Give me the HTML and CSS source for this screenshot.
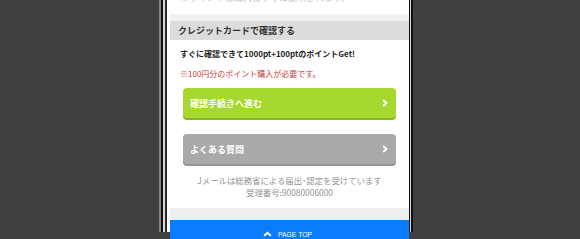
FILE: index.html
```html
<!DOCTYPE html>
<html lang="ja">
<head>
<meta charset="utf-8">
<title>クレジットカードで確認する</title>
<link rel="stylesheet" href="styles.css">
</head>
<body>
<div class="screen">
  <p class="cut">※ポイントは購入後すぐに反映されます。</p>
  <section class="card">
    <h2 class="card-title">クレジットカードで確認する</h2>
    <div class="card-body">
      <p class="lead">すぐに確認できて1000pt+100ptのポイントGet!</p>
      <p class="note">※100円分のポイント購入が必要です。</p>
      <a class="btn btn-green" href="#">確認手続きへ進む<svg class="chev" viewBox="0 0 6 8" width="6" height="8"><polyline points="1.2,1 4.5,4 1.2,7" fill="none" stroke="#fff" stroke-width="1.9"/></svg></a>
      <a class="btn btn-gray" href="#">よくある質問<svg class="chev" viewBox="0 0 6 8" width="6" height="8"><polyline points="1.2,1 4.5,4 1.2,7" fill="none" stroke="#fff" stroke-width="1.9"/></svg></a>
      <p class="license">Jメールは総務省による届出･認定を受けています<br>受理番号:90080006000</p>
    </div>
  </section>
  <div class="gap"></div>
  <a class="pagetop" href="#"><svg class="up" viewBox="0 0 10 6" width="9" height="6"><polyline points="1.3,5 5,1.6 8.7,5" fill="none" stroke="#fff" stroke-width="2.2"/></svg>PAGE TOP</a>
</div>
</body>
</html>
```
FILE: styles.css
```css
html, body {
  margin: 0;
  padding: 0;
  height: 100%;
  overflow: hidden;
}
body {
  background: #404040;
  font-family: "Noto Sans CJK JP", "Noto Sans", sans-serif;
}
.screen {
  box-sizing: border-box;
  margin-left: 167px;
  width: 242px;
  height: 100%;
  padding-left: 3px;
  background: #fff;
  box-shadow:
    -2px 0 0 #2a2a2a,
    1px 0 0 #111,
    -4px 0 0 #d8d8d8,
    2px 0 0 #d8d8d8,
    -6px 0 0 #111,
    4px 0 0 #111,
    -8px 0 0 #858585;
}
.cut {
  margin: -7px 0 0;
  padding: 0 0 11px 10px;
  font-size: 9px;
  line-height: 10px;
  color: #c4c4c4;
}
.card {
  border-top: 7px solid #f1f1f1;
}
.card-title {
  margin: 0;
  height: 19px;
  line-height: 19px;
  padding-left: 8px;
  background: #dcdcdc;
  color: #333;
  font-size: 9px;
  font-weight: bold;
}
.card-body {
  padding: 8px 0 10px;
}
.lead, .note {
  margin: 0 0 8px;
  padding-left: 10px;
  font-size: 8px;
  line-height: 12px;
}
.lead {
  font-weight: bold;
  color: #222;
}
.note {
  color: #c9403a;
}
.btn {
  display: flex;
  align-items: center;
  justify-content: space-between;
  height: 30px;
  margin: 0 13px 16px;
  padding: 0 8px 0 7px;
  border-radius: 4px;
  color: #fff;
  font-size: 9px;
  font-weight: bold;
  text-decoration: none;
}
.btn-green {
  background: #a6d92f;
  box-shadow: 0 2px 0 #88b522;
}
.btn-gray {
  background: #a9a9a9;
  box-shadow: 0 2px 0 #959595;
  margin-bottom: 10px;
}
.chev {
  display: block;
}
.license {
  margin: 0;
  text-align: center;
  font-size: 8.4px;
  line-height: 12px;
  color: #929292;
}
.gap {
  height: 12px;
  background: #eeeeee;
}
.pagetop {
  display: flex;
  align-items: center;
  justify-content: center;
  gap: 6px;
  height: 28px;
  padding-right: 4px;
  background: #0a7cfd;
  color: #fff;
  font-family: "Liberation Sans", Arial, sans-serif;
  font-size: 6.8px;
  text-decoration: none;
}
.pagetop .up {
  display: block;
}
```
